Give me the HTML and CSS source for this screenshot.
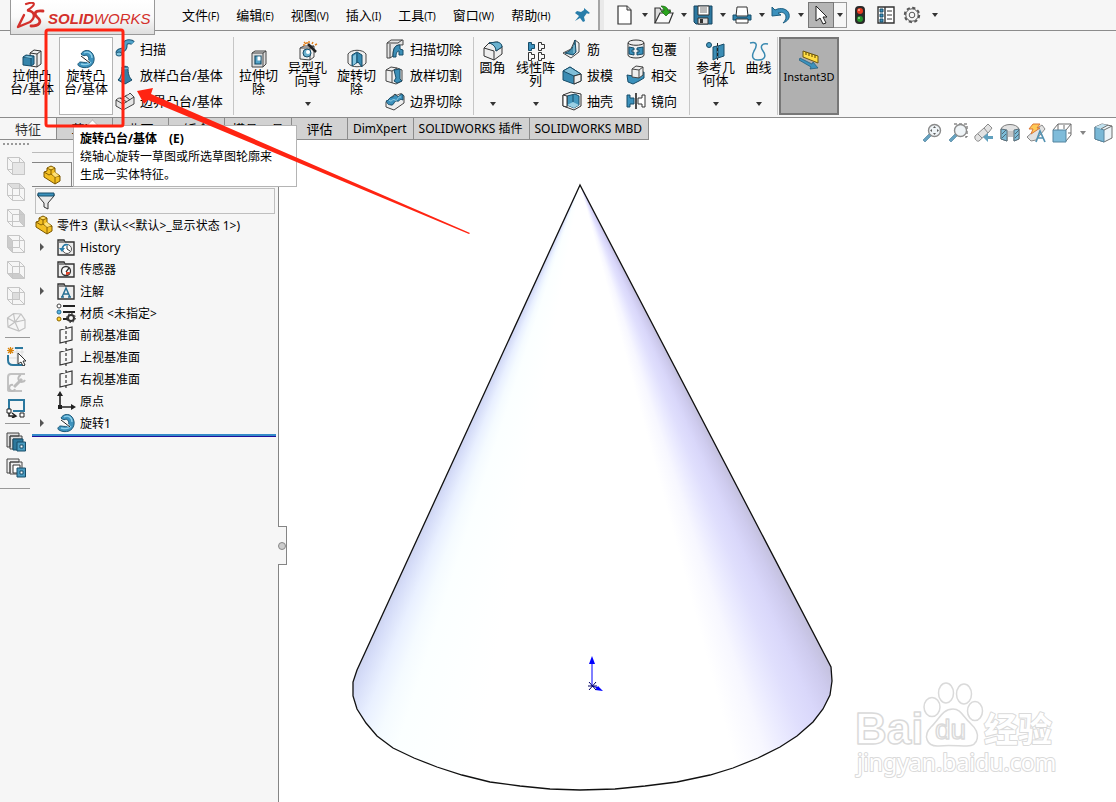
FILE: index.html
```html
<!DOCTYPE html>
<html lang="zh-CN">
<head>
<meta charset="utf-8">
<title>SOLIDWORKS</title>
<link rel="stylesheet" href="styles.css">
</head>
<body>
<svg class="defs" aria-hidden="true">
  <symbol id="revolve" viewBox="0 0 20 20">
    <path d="M5 5C7 1 13 0 16 4c4 5 2 12-3 14-3 1-7 1-10-1-2-1-1-3 1-4 3 0 5 1 7 0 3-2 2-6-1-7-1 1-3 1-5-1z" fill="#3d92bd" stroke="#1d5877"/>
    <path d="M8 4c4-2 8 0 8 5M5 15c4 1 8 1 10-2" fill="none" stroke="#8fd0ea" stroke-width="1.3"/>
    <path d="M5 8l8 5" stroke="#fff" stroke-width="2.400"/><path d="M5 7l9 7" stroke="#222"/>
  </symbol>
  <symbol id="part" viewBox="0 0 20 20">
    <path d="M2 7l3-1V3l4-2 4 2v4l1 1 4 3v5l-5 3L2 12z" fill="#f3bf23" stroke="#7b5700"/>
    <path d="M2 7l5 3 2-1 4 3 5-1M13 12v7M9 5v4M5 3l4 2 4-2" fill="none" stroke="#7b5700" stroke-width=".9"/>
    <path d="M6 3l3-1 3 1-3 1zM10 9l3-2 4 4-4 1z" fill="#ffe17a"/>
  </symbol>
  <symbol id="plane" viewBox="0 0 20 20">
    <path d="M4 5l12-3v13L4 18zM10 1v3M10 6v3M10 11v3M10 16v3" fill="none" stroke="#333" stroke-width="1.2"/>
  </symbol>
  <symbol id="folder" viewBox="0 0 20 20">
    <path d="M2 3h6l1 2h9v13H2z" fill="#eee" stroke="#333" stroke-width="1.4"/><path d="M3 4h5l1 2H3z" fill="#888"/>
  </symbol>
  <symbol id="wire" viewBox="0 0 20 20">
    <path d="M1.500 1.500h12v12h-12zM6.500 6.500h12v12h-12zM1.500 1.500l5 5M13.500 1.500l5 5M1.500 13.500l5 5M13.500 13.500l5 5" fill="none" stroke="#c6c6c6"/>
  </symbol>
  <symbol id="scope" viewBox="0 0 20 20">
    <path d="M1 17l2 2 7-7-2-2z" fill="#4d93b7" stroke="#34708f" stroke-width=".7"/>
    <circle cx="12.500" cy="7.500" r="6" fill="#edf3f6" stroke="#777" stroke-width="1.400"/>
  </symbol>
</svg>

<div class="app">
  <header class="menubar">
    <div class="logo">
      <svg class="logo-mark" viewBox="16 2 32 30" aria-hidden="true">
        <g fill="none" stroke="#d3302b" stroke-linecap="round" stroke-linejoin="round">
          <path d="M26 4C35 1 37 4 28 10" stroke-width="2.200"/>
          <path d="M28 10.500C36 12 35 18 30 22L18 27l6-12" stroke-width="2.400"/>
          <path d="M43 11C34 10 34 14 37 17C43 22 39 26 31 26" stroke-width="2.800"/>
        </g>
      </svg>
      <span class="logo-text"><b>SOLID</b>WORKS</span>
    </div>
    <nav class="menus" aria-label="主菜单">
      <button>文件<small>(F)</small></button>
      <button>编辑<small>(E)</small></button>
      <button>视图<small>(V)</small></button>
      <button>插入<small>(I)</small></button>
      <button>工具<small>(T)</small></button>
      <button>窗口<small>(W)</small></button>
      <button>帮助<small>(H)</small></button>
      <button class="pin" aria-label="固定"><svg viewBox="0 0 20 20"><path d="M11 3l6 5-2 1-1-1-3 4 1 4-2 1-3-4-5 3 4-5-4-3 2-2 4 1 3-2z" fill="#287daa"/></svg></button>
    </nav>
    <div class="quick">
      <button aria-label="新建"><svg viewBox="0 0 20 20"><path d="M3 1h9l4 4v14H3z" fill="#fff" stroke="#333" stroke-width="1.200"/><path d="M12 1v4h4" fill="#ddd" stroke="#333"/></svg></button><button class="drop" aria-label="新建选项"></button>
      <button aria-label="打开"><svg viewBox="0 0 20 20"><path d="M1 18V3h5l1 2h9v3" fill="#ddd" stroke="#333" stroke-width="1.200"/><path d="M1 18L6 8h13l-4 10z" fill="#fafafa" stroke="#333" stroke-width="1.200"/><path d="M7 1c5 0 7 2 7 5h3l-5 5-5-5h3c0-2-1-3-3-5z" fill="#2ba51e" stroke="#176010" stroke-width=".7"/></svg></button><button class="drop" aria-label="打开选项"></button>
      <button aria-label="保存"><svg viewBox="0 0 20 20"><path d="M1 1h18v18H3l-2-2z" fill="#2c78a0" stroke="#174560"/><path d="M5 1h11v9H5z" fill="#fff" stroke="#333"/><path d="M7 3h7M7 5h7M7 7h7" stroke="#777"/><path d="M5 13h10v6H5z" fill="#ddd" stroke="#333"/><path d="M7 14h3v4H7z" fill="#333"/></svg></button><button class="drop" aria-label="保存选项"></button>
      <button aria-label="打印"><svg viewBox="0 0 20 20"><path d="M5 2h10l1 9H4z" fill="#fff" stroke="#333"/><path d="M1 10h3l1 2h10l1-2h3v5H1z" fill="#2f83ad" stroke="#174c68"/><path d="M4 14h12v4H4z" fill="#fff" stroke="#333"/></svg></button><button class="drop" aria-label="打印选项"></button>
      <button aria-label="撤消"><svg viewBox="0 0 20 20"><path d="M1 2v9l9-1-3-2c5-2 8 1 8 4 0 2-1 4-3 6 5-2 7-5 6-9C17 4 10 2 4 5z" fill="#3c91bd" stroke="#1d5e80"/></svg></button><button class="drop" aria-label="撤消选项"></button>
      <button class="select on" aria-label="选择"><svg viewBox="0 0 20 20"><path d="M5 1v15l4-3 3 6 3-1-3-6h4z" fill="#fff" stroke="#222"/></svg></button><button class="drop boxed" aria-label="选择选项"></button>
      <button class="wide" aria-label="重建模型"><svg viewBox="0 0 20 20"><rect x="5" y="1" width="10" height="18" rx="4" fill="#2a2a2a"/><circle cx="10" cy="6" r="3" fill="#e83b22"/><circle cx="10" cy="14" r="3" fill="#26932b"/><circle cx="9" cy="5" r="1" fill="#ffb09c"/><circle cx="9" cy="13" r="1" fill="#9de39b"/></svg></button>
      <button class="wide" aria-label="文件属性"><svg viewBox="0 0 20 20"><path d="M2 2h16v16H2zM9 2v16" fill="#fff" stroke="#333" stroke-width="1.400"/><path d="M4 4h3v3H4zM4 9h3v3H4zM4 14h3v3H4z" fill="#3c91bd" stroke="#174c68"/><path d="M11 6h5M11 10h5M11 14h5" stroke="#333"/></svg></button>
      <button class="wide" aria-label="选项"><svg viewBox="0 0 20 20"><circle cx="10" cy="10" r="7.200" fill="none" stroke="#555" stroke-width="2" stroke-dasharray="3.200 2.450"/><circle cx="10" cy="10" r="6.200" fill="#f6f6f6" stroke="#555"/><circle cx="10" cy="10" r="2.800" fill="none" stroke="#555"/></svg></button><button class="drop" aria-label="更多选项"></button>
    </div>
  </header>

  <section class="ribbon" aria-label="特征工具">
    <div class="group first">
      <button class="tool lg"><svg viewBox="0 0 20 20"><path d="M8 4l4-3 7 1v13l-4 3-6-1z" fill="#eee" stroke="#333"/><path d="M15 5v13M8 4l7 1 4-3" fill="none" stroke="#333"/><path d="M1 8l3-2 8 1v8l-3 2-8-1z" fill="#3584ab" stroke="#174c68"/><path d="M1 8l8 1 3-2M9 9v8" fill="none" stroke="#174c68"/><path d="M2 8l3-1 6 1-2 1z" fill="#88c7e0"/></svg><span>拉伸凸<br>台/基体</span></button>
      <button class="tool lg hover"><svg><use href="#revolve"/></svg><span>旋转凸<br>台/基体</span></button>
      <div class="stack">
        <button class="row"><svg viewBox="0 0 20 20"><path d="M3 14c0-4 8-1 7-8 0-4 6-4 8-2" fill="none" stroke="#1d5877" stroke-width="5"/><path d="M3 14c0-4 8-1 7-8 0-4 6-4 8-2" fill="none" stroke="#4fa3cb" stroke-width="3"/><ellipse cx="4" cy="15" rx="3" ry="2" fill="#82c5df" stroke="#1d5877"/></svg>扫描</button>
        <button class="row"><svg viewBox="0 0 20 20"><path d="M7 2c2-1 4-1 6 0 0 7 1 10 4 13l-7 4-7-4c3-3 4-6 4-13z" fill="#347fa5" stroke="#174c68"/><path d="M7 3c2 1 4 1 6 0M8 5c0 5-1 8-3 10" fill="none" stroke="#8fcde5"/></svg>放样凸台/基体</button>
        <button class="row"><svg viewBox="0 0 20 20"><path d="M1 9c4-4 5 0 8-3s4-1 6-4l4 4v7L8 19l-7-4z" fill="#e5e5e5" stroke="#444"/><path d="M1 9l7 4 11-7M8 13v6M5 7l7 4M10 5l5 4" fill="none" stroke="#444"/></svg>边界凸台/基体</button>
      </div>
    </div>
    <div class="group cuts">
      <button class="tool"><svg viewBox="0 0 20 20"><path d="M3 4l3-2h11v13l-3 3H3z" fill="#ddd" stroke="#444"/><path d="M3 4h11v14M14 4l3-2" fill="none" stroke="#444"/><path d="M6 7h6v8H6z" fill="#56a4c8" stroke="#174c68" stroke-width="1.200"/><path d="M8.500 7.500h3v4h-3z" fill="#fff"/></svg><span>拉伸切<br>除</span></button>
      <button class="tool has-drop"><svg viewBox="0 0 20 20"><path d="M2 7l4-2h10v11l-4 3-10-1z" fill="#eee" stroke="#444"/><path d="M2 7h10v12M12 7l4-2" fill="none" stroke="#444"/><circle cx="9" cy="12" r="4" fill="#69b1cf" stroke="#174c68"/><circle cx="10" cy="11" r="2" fill="#fff"/><path d="M10 3l8 8" stroke="#222" stroke-width="2.500"/><path d="M6 1l2 2M11 0v2M15 1l-1 2M17 4l2-1M5 4h2M8 2h2" stroke="#e17c16" stroke-width="1.400"/></svg><span>异型孔<br>向导</span><i class="caret"></i></button>
      <button class="tool"><svg viewBox="0 0 20 20"><path d="M1 5c3-5 15-5 18 0v9c-3 5-15 5-18 0z" fill="#eee" stroke="#444"/><path d="M5 6l5-3 5 3v12l-4-5-6 4z" fill="#388bb3" stroke="#174c68"/><path d="M10 4v10" stroke="#174c68"/><path d="M6 7l3-2v9l-3 2z" fill="#86c5df"/></svg><span>旋转切<br>除</span></button>
      <div class="stack">
        <button class="row"><svg viewBox="0 0 20 20"><path d="M2 4l4-3h12v5C10 5 8 9 8 17l-3 2H2z" fill="#e5e5e5" stroke="#444"/><path d="M2 4h11l4-3M5 19V5" fill="none" stroke="#444"/><path d="M8 18C8 9 10 6 15 6v4l3 1v5h-4v-4c-2 0-3 2-3 6z" fill="#3d8fb7" stroke="#174c68"/></svg>扫描切除</button>
        <button class="row"><svg viewBox="0 0 20 20"><path d="M1 5l5-3 6 1 5 2v11l-6 3-10-3z" fill="#eee" stroke="#444"/><path d="M1 5l6 1 5-3M7 6v12" fill="none" stroke="#444"/><path d="M9 5l6-1v10l2 2-5 2-3-2 2-3z" fill="#3c8fb7" stroke="#174c68"/></svg>放样切割</button>
        <button class="row"><svg viewBox="0 0 20 20"><path d="M1 11l9-8c3 4 5-4 9 2v7l-10 7-8-3z" fill="#eee" stroke="#444"/><path d="M1 10c3 0 3-4 6-4s3-4 5-1 3-4 6-1v5c-4-2-3 2-6 1s-3 5-6 4-2 1-5-4z" fill="#3c91bd" stroke="#174c68"/><path d="M4 9c3 3 3-2 6 0s2-4 6-3" fill="none" stroke="#9ad2e7"/></svg>边界切除</button>
      </div>
    </div>
    <div class="group mods">
      <button class="tool sm has-drop"><svg viewBox="0 0 20 20"><path d="M1 7l5-5 9-1 4 4v8l-8 6-10-4z" fill="#eee" stroke="#333"/><path d="M1 7l5-5c5 1 7 3 7 8l6-4M1 7l10 3v9" fill="none" stroke="#333"/><path d="M6 2l7-1c4 0 6 2 6 5l-6 4c0-4-3-7-7-8z" fill="#69b1cf" stroke="#174c68"/></svg><span>圆角</span><i class="caret"></i></button>
      <button class="tool has-drop"><svg viewBox="0 0 20 20"><path d="M2.500 11.500h3v2h3v4h-3v2h-3zM12.500 11.500h3v2h3v4h-3v2h-3zM12.500 1.500h3v2h3v4h-3v2h-3z" fill="none" stroke="#333"/><path d="M2.500 1.500h3v2h3v4h-3v2h-3z" fill="#3c91bd" stroke="#174c68"/></svg><span>线性阵<br>列</span><i class="caret"></i></button>
      <div class="stack">
        <button class="row"><svg viewBox="0 0 20 20"><path d="M1 14l8-4 4-9 4 3v9l-8 6z" fill="#eee" stroke="#444"/><path d="M13 1c-1 7-4 11-10 13l8 2 3-3z" fill="#438fae" stroke="#174c68"/><path d="M12 6v8" stroke="#a0d4e7"/></svg>筋</button>
        <button class="row"><svg viewBox="0 0 20 20"><path d="M1 6l7-4 11 7v7l-7 3-11-4z" fill="#398bb3" stroke="#174c68"/><path d="M1 6l11 5 7-2-11-7z" fill="#80bed8" stroke="#174c68"/><path d="M12 11l7-2v7l-7 3z" fill="#eee" stroke="#333"/></svg>拔模</button>
        <button class="row"><svg viewBox="0 0 20 20"><path d="M1 4l8-3 10 2v12l-7 4-11-4z" fill="#f4f4f4" stroke="#333"/><path d="M5 5l8-2 4 2v9l-5 3-7-3z" fill="#4397bd" stroke="#174c68"/><path d="M5 14l6-3 6 3-5 3z" fill="#9bd0e4"/><path d="M11 4v7" stroke="#174c68"/><path d="M1 4l4 1v11l-4-1z" fill="#fff" stroke="#333"/></svg>抽壳</button>
      </div>
      <div class="stack">
        <button class="row"><svg viewBox="0 0 20 20"><path d="M2 4c0-4 16-4 16 0v12c0 4-16 4-16 0z" fill="#eee" stroke="#333"/><path d="M2 4c2 3 14 3 16 0" fill="none" stroke="#333"/><path d="M3 8l5 1v2H6v2h2v3l-5-1zM11 9l6-1v7l-6 1v-3h2v-2h-2z" fill="#3b91bc" stroke="#174c68"/></svg>包覆</button>
        <button class="row"><svg viewBox="0 0 20 20"><path d="M1 10l6 1 5-3 6-1v6l-5 3-6 3-5-2z" fill="#3b91bc" stroke="#174c68"/><path d="M6 4l4-3 7 1v8l-4 3-7-1z" fill="#eee" stroke="#444"/><path d="M6 4l7 1v8M13 5l4-3" fill="none" stroke="#444"/></svg>相交</button>
        <button class="row"><svg viewBox="0 0 20 20"><path d="M10 2v16" stroke="#222" stroke-width="1.600"/><path d="M1 4h3v3h4v6H4v3H1z" fill="#3b91bc" stroke="#174c68"/><path d="M19 4h-3v3h-4v6h4v3h3z" fill="#fff" stroke="#333"/></svg>镜向</button>
      </div>
    </div>
    <div class="group refs">
      <button class="tool has-drop"><svg viewBox="0 0 20 20"><circle cx="3" cy="4" r="2.500" fill="#4299c1" stroke="#174c68"/><path d="M7 6l4-1v12l-4 2zM12 5l6-2v12l-6 2z" fill="#3b8db5" stroke="#174c68"/><path d="M11.500 2v17" stroke="#222" stroke-dasharray="3 2"/></svg><span>参考几<br>何体</span><i class="caret"></i></button>
      <button class="tool sm has-drop"><svg viewBox="0 0 20 20"><path d="M1 2c8-2 7 3 4 8-3 6-1 9 4 9 8 0 8-5 5-9s-2-8 5-7" fill="none" stroke="#3989b0" stroke-width="1.500"/></svg><span>曲线</span><i class="caret"></i></button>
    </div>
    <button class="tool instant" aria-pressed="true"><svg viewBox="0 0 20 20"><path d="M4 1l15 5v7L4 7z" fill="#ffdd45" stroke="#6d5710"/><path d="M7 2v3M10 3v3M13 4v3M16 5v3" stroke="#5b4300"/><path d="M1 8l12 6 1-2 5 6-8 1 1-2L0 10z" fill="#3d92bd" stroke="#1d5877" stroke-width=".7"/></svg><span>Instant3D</span></button>
  </section>

  <div class="tabrow">
    <div class="tabs" role="tablist">
      <button role="tab" aria-selected="true">特征</button>
      <button role="tab">草图</button>
      <button role="tab">曲面</button>
      <button role="tab">钣金</button>
      <button role="tab">模具工具</button>
      <button role="tab">评估</button>
      <button role="tab" class="latin">DimXpert</button>
      <button role="tab" class="latin">SOLIDWORKS 插件</button>
      <button role="tab" class="latin">SOLIDWORKS MBD</button>
    </div>
    <div class="hud">
      <button aria-label="整屏显示全图"><svg viewBox="0 0 20 20"><use href="#scope"/><path d="M12.500 3l-1.500 2h3zM12.500 12l-1.500-2h3zM8 7.500l2-1.500v3zM17 7.500l-2-1.500v3z" fill="#444"/></svg></button>
      <button aria-label="局部放大"><svg viewBox="0 0 20 20"><path d="M6 1h13v13h-4" fill="none" stroke="#333" stroke-dasharray="3 2"/><use href="#scope"/></svg></button>
      <button aria-label="上一视图"><svg viewBox="0 0 20 20"><path d="M1 13l9-8 4-4 4 4-3 4-10 9c-2 1-5-2-4-5z" fill="#ddd" stroke="#777"/><path d="M10 5l4 5M4 11l4 4" stroke="#777"/><path d="M9 14l5-4v3h5v3h-5v3z" fill="#4590b3"/></svg></button>
      <button aria-label="剖面视图"><svg viewBox="0 0 20 20"><path d="M1 6c2-6 16-6 18 0v10l-5 2V9H7v9l-6-2z" fill="#ddd" stroke="#666"/><path d="M7 8h7v6H7z" fill="#bbb"/><path d="M1 6l6 1v11l-6-2zM14 7l5-1v10l-5 2z" fill="#67b2d3" stroke="#3c5664"/><path d="M2 11l4-4M2 15l4-4M15 11l4-4M15 15l4-4" stroke="#2f5162"/></svg></button>
      <button aria-label="动态注解视图"><svg viewBox="0 0 20 20"><path d="M1 14l9-8 6-4 3 4-9 11-5 1z" fill="#ddd" stroke="#777"/><path d="M7 1h7l-3 4h3L5 11l2-5H3z" fill="#ffc13a" stroke="#d75f12"/><path d="M10 19l4-11 5 11M12 15h5" fill="none" stroke="#367fa4" stroke-width="1.700"/></svg></button>
      <button aria-label="视图定向"><svg viewBox="0 0 20 20"><path d="M1 7l5-6h13v11l-5 6" fill="#fff" stroke="#555"/><path d="M14 7l5-6M6 1v6M12 2v4M16 10h3" fill="none" stroke="#555"/><path d="M1 7h13v12H1z" fill="#69b1d4" stroke="#39718f"/></svg></button>
      <button class="drop faded" aria-label="视图选项"></button>
      <button aria-label="显示样式"><svg viewBox="0 0 20 20"><path d="M2 4l7-3 10 2v12l-8 4-9-3z" fill="#e8f3f7" stroke="#555"/><path d="M2 4l9 3v12l-9-3z" fill="#62acd0" stroke="#39718f"/><path d="M2 4l7-3 6 1-7 4z" fill="#b6dced"/><path d="M11 7l8-4M8 6l7-4" stroke="#555"/></svg></button>
    </div>
  </div>

  <main class="workspace">
    <div class="side" role="toolbar" aria-label="视图工具">
      <div class="grip"></div>
      <button aria-label="前视"><svg viewBox="0 0 20 20"><use href="#wire"/><path d="M6.500 6.500h12v12h-12z" fill="#e6e6e6" stroke="#c6c6c6"/></svg></button>
      <button aria-label="后视"><svg viewBox="0 0 20 20"><path d="M2 2h12l4 4H6z" fill="#ddd"/><use href="#wire"/></svg></button>
      <button aria-label="右视"><svg viewBox="0 0 20 20"><path d="M14 2l4 4v12l-4-4z" fill="#ccc"/><use href="#wire"/></svg></button>
      <button aria-label="左视"><svg viewBox="0 0 20 20"><path d="M2 2l4 4v12l-4-4z" fill="#ccc"/><use href="#wire"/></svg></button>
      <button aria-label="上视"><svg viewBox="0 0 20 20"><path d="M2 14h12l4 4H6z" fill="#ccc"/><use href="#wire"/></svg></button>
      <button aria-label="下视"><svg viewBox="0 0 20 20"><path d="M6 6h8v8H6z" fill="#ddd"/><use href="#wire"/></svg></button>
      <button aria-label="等轴测"><svg viewBox="0 0 20 20"><path d="M1.500 6l6-4.500L15 2l4 6v8l-6 3-11-4zM1.500 6L9 10l10-2M9 10l4 9M15 2L9 10l-7 5M7.500 1.500L9 10" fill="none" stroke="#c2c2c2" stroke-width="1.200"/></svg></button>
      <hr>
      <button aria-label="草图"><svg viewBox="0 0 20 20"><path d="M6 2h10v14M2 6h16M2 12h16M11 2v16" fill="none" stroke="#ddd"/><path d="M9 2h8M2 9v5c0 3 2 5 5 5h12" fill="none" stroke="#2b789f" stroke-width="2"/><path d="M4.500 1v7M1 4.500h7M2 2l5 5M7 2L2 7" stroke="#d9830a" stroke-width="1.200"/><path d="M12 7v11l3-2 2 4 2-1-2-4h3z" fill="#fff" stroke="#333"/></svg></button>
      <button aria-label="编辑"><svg viewBox="0 0 20 20"><path d="M19 2H5C3 2 2 3 2 5v13c0 1 1 1 2 1h12" fill="none" stroke="#c2c2c2" stroke-width="2"/><path d="M8 15l8-8" stroke="#bbb" stroke-width="3"/><path d="M9 17a3 3 0 1 1-2-4M15 3a3.500 3.500 0 1 0 4 5" fill="none" stroke="#bbb" stroke-width="2"/></svg></button>
      <button aria-label="移动"><svg viewBox="0 0 20 20"><path d="M3 12V2h15v11H7" fill="none" stroke="#2b789f" stroke-width="2"/><path d="M1 11h4v4H1zM14 15h4v4h-4z" fill="#fff" stroke="#222"/><path d="M3 15v3h6M6 15l4 3-4 2" fill="none" stroke="#222" stroke-width="1.500"/></svg></button>
      <hr>
      <button aria-label="复制实体"><svg viewBox="0 0 20 20"><path d="M1 1h12v3H4v11H1zM4 4h12v3H7v10H4z" fill="#ddd" stroke="#444"/><path d="M7 7h10v11H7z" fill="#2d789c" stroke="#174c68"/><path d="M11 10h8.500v9H11z" fill="#4a9bc0" stroke="#174c68"/><path d="M14 13h3v3h-3z" fill="#fff" stroke="#174c68"/></svg></button>
      <button aria-label="复制面"><svg viewBox="0 0 20 20"><path d="M1 1h12v3H4v11H1zM4 4h12v12H4z" fill="#eee" stroke="#444"/><path d="M7 7h7v8H7z" fill="#fff" stroke="#333"/><path d="M11 10h8.500v9H11z" fill="#4a9bc0" stroke="#174c68"/><path d="M14 13h3v3h-3z" fill="#fff" stroke="#174c68"/></svg></button>
      <hr class="full">
    </div>
    <aside class="panel">
      <div class="panel-tabs"><button aria-label="特征管理器"><svg><use href="#part"/></svg></button></div>
      <label class="filter"><svg viewBox="0 0 20 20"><path d="M2 3h16v2l-6 7v6l-4-2v-4L2 5z" fill="#e8e8e8" stroke="#333"/><path d="M2 2h16v3H2z" fill="#3b91bc" stroke="#174c68"/></svg><input type="text" aria-label="过滤"></label>
      <ul class="tree">
        <li class="root"><svg><use href="#part"/></svg><span>零件3&nbsp; (默认&lt;&lt;默认&gt;_显示状态 1&gt;)</span></li>
        <li class="open"><svg viewBox="0 0 20 20"><use href="#folder"/><circle cx="11" cy="12" r="4.500" fill="#fff" stroke="#555"/><path d="M11 9v3l3 2" fill="none" stroke="#333"/><path d="M3 11h6l-3 4z" fill="#287daa"/><path d="M6 12c1-4 3-5 6-4" fill="none" stroke="#287daa" stroke-width="1.600"/></svg><span>History</span></li>
        <li><svg viewBox="0 0 20 20"><use href="#folder"/><circle cx="10" cy="12" r="4.500" fill="#fff" stroke="#333" stroke-width="1.300"/><path d="M10 13l3-4" stroke="#333" stroke-width="1.300"/><path d="M10 13l4 0c0 2-2 3-4 3z" fill="#e0442a"/></svg><span>传感器</span></li>
        <li class="open"><svg viewBox="0 0 20 20"><use href="#folder"/><path d="M6 16l4-9 4 9M7 13h6M5 16h3M12 16h3" fill="none" stroke="#276f93" stroke-width="1.500"/></svg><span>注解</span></li>
        <li><svg viewBox="0 0 20 20"><path d="M7 3h12M7 9h12M7 16h5" stroke="#222" stroke-width="2"/><circle cx="3" cy="3" r="2" fill="#fff" stroke="#444"/><circle cx="3" cy="9" r="2" fill="#58b3e0" stroke="#276f93"/><circle cx="3" cy="16" r="2" fill="#ffd12e" stroke="#8a6400"/><circle cx="15" cy="15" r="3" fill="none" stroke="#333" stroke-width="2"/><circle cx="15" cy="15" r="4.500" fill="none" stroke="#333" stroke-dasharray="1.500 2"/></svg><span>材质 &lt;未指定&gt;</span></li>
        <li><svg><use href="#plane"/></svg><span>前视基准面</span></li>
        <li><svg><use href="#plane"/></svg><span>上视基准面</span></li>
        <li><svg><use href="#plane"/></svg><span>右视基准面</span></li>
        <li><svg viewBox="0 0 20 20"><path d="M4 3v13h13" fill="none" stroke="#222" stroke-width="1.600"/><path d="M4 0l-3 5h6zM20 16l-5-3v6zM2 14h4v4H2z" fill="#222"/></svg><span>原点</span></li>
        <li class="open"><svg><use href="#revolve"/></svg><span>旋转1</span></li>
      </ul>
      <div class="rollback"></div>
      <button class="splitter" aria-label="折叠面板"></button>
    </aside>
    <div class="viewport">
      <svg viewBox="279 140 837 662" role="img" aria-label="圆锥">
        <defs><clipPath id="cone"><path id="cone-outline" d="M580 185L357 670 353 682V696L357 709 366 723 377 736 393 748 414 758 437 767 462 775 490 782 520 786 550 789 580 790 615 789 645 786 677 782 710 775 733 768 758 758 780 747 797 736 813 722 823 709 830 695 832 681 831 667z"/></clipPath></defs>
        <g clip-path="url(#cone)"><foreignObject x="353" y="185" width="480" height="606"><div class="cone-shade"></div></foreignObject></g>
        <use href="#cone-outline" fill="none" stroke="#111" stroke-width="1.300"/>
        <g stroke="#00f" fill="#00f"><path d="M592 686v-24M592 686l6 2"/><path d="M592 656l-3 8h6zM603 691l-8-1 3-4z" stroke="none"/><path d="M588 686h9M589 682l7 8M596 682l-7 8" stroke="#006"/></g>
        <g class="mark">
          <text x="855" y="744" class="mark-latin">Bai</text>
          <ellipse cx="932" cy="707" rx="8" ry="9.500"/><ellipse cx="946" cy="693" rx="7.500" ry="10"/><ellipse cx="964" cy="694" rx="7.500" ry="10"/><ellipse cx="975" cy="711" rx="7.500" ry="9.500"/>
          <path d="M953 709c8 0 10 8 18 15 10 9 8 22-4 22-8 0-20-1-28 0-13 1-16-11-8-19 8-7 11-18 22-18z"/>
          <text x="935" y="739" class="mark-du">du</text>
          <text x="984" y="742" class="mark-cjk">经验</text>
          <text x="857" y="771" class="mark-url">jingyan.baidu.com</text>
        </g>
      </svg>
    </div>
  </main>

  <div class="tooltip" role="tooltip">
    <strong>旋转凸台/基体<span>(E)</span></strong>
    <p>绕轴心旋转一草图或所选草图轮廓来<br>生成一实体特征。</p>
  </div>
  <svg class="callout" viewBox="0 0 480 240" aria-hidden="true">
    <rect x="46" y="30" width="77" height="96" rx="2" fill="none" stroke="#ff2412" stroke-width="3"/>
    <path d="M137 91l16-3-2 6 319 139-1 1-321-134-4 4z" fill="#ff2412"/>
  </svg>
</div>
</body>
</html>
```

FILE: styles.css
```css
* { box-sizing: border-box; }
body {
  margin: 0;
  background: #fff;
  color: #000;
  font: 12px/18px "Noto Sans", "Noto Sans CJK SC", sans-serif;
}
button {
  margin: 0;
  padding: 0;
  border: 0;
  background: none;
  color: inherit;
  font: inherit;
  white-space: nowrap;
}
button svg, .tree svg, .filter svg { display: block; flex: none; width: 20px; height: 20px; }
.defs { display: none; }

.app {
  position: relative;
  display: flex;
  flex-direction: column;
  height: 100vh;
  overflow: hidden;
}

/* Menu bar */
.menubar {
  display: flex;
  flex: none;
  height: 31px;
  border-bottom: 1px solid #8c8c8c;
  background: #f6f6f6;
}
.logo {
  position: absolute;
  top: 0;
  left: 10px;
  z-index: 1;
  display: flex;
  align-items: center;
  width: 145px;
  height: 35px;
  padding-left: 5px;
  border: 1px solid #999;
  border-top: 0;
  background: linear-gradient(#fff, #fafafa 50%, #dedede);
}
.logo-mark { flex: none; width: 32px; height: 30px; }
.logo-text { padding-top: 4px; color: #d3302b; font: italic 15px/20px "Liberation Sans", sans-serif; }
.menus {
  display: flex;
  flex: none;
  gap: 17px;
  width: 600px;
  padding-left: 182px;
  border-right: 2px solid #a5a5a5;
  font-size: 13px;
}
.menus small { font-size: 10px; }
.menus .pin { margin-left: 5px; }
.quick { display: flex; align-items: center; padding-left: 15px; box-shadow: inset 4px 0 0 #e9e9e9; }
.quick .select { width: 26px; height: 26px; margin-left: -2px; padding-left: 2px; border: 1px solid #777; background: #b5b5b5; }
.quick .wide { width: 26px; padding-left: 3px; }
.drop { display: flex; align-items: center; justify-content: center; width: 19px; height: 26px; }
.drop::before, .caret {
  width: 0;
  height: 0;
  border: 3px solid transparent;
  border-top: 4px solid #333;
  border-bottom: 0;
  content: "";
}
.drop.boxed { width: 13px; border: 1px solid #999; border-left: 0; }
.drop.faded { width: 15px; height: 20px; opacity: .6; }

/* Ribbon */
.ribbon {
  display: flex;
  flex: none;
  height: 87px;
  padding: 6px 0 2px;
  border-bottom: 1px solid #8c8c8c;
  background: #f6f6f6;
  font-size: 13px;
  line-height: 13px;
}
.group { display: flex; flex: none; border-right: 1px solid #c6c6c6; }
.group.first { width: 234px; padding-left: 5px; }
.group.cuts { width: 240px; }
.group.mods { width: 216px; }
.group.refs { width: 88px; padding-left: 1px; }
.tool {
  display: flex;
  flex: none;
  flex-direction: column;
  align-items: center;
  width: 49px;
  padding-top: 11px;
  border: 1px solid transparent;
}
.tool.lg { width: 54px; }
.tool.sm { width: 37px; }
.tool.has-drop { padding: 3px 0 8px; }
.tool .caret { margin-top: auto; }
.tool.hover { border-color: #b4b4b4; background: #fff; }
.tool.instant { width: 60px; margin-left: 1px; border: 2px solid #777; background: #b0b0b0; font-size: 11px; }
.stack { display: flex; flex-direction: column; padding-left: 2px; }
.cuts .stack { padding-left: 4px; }
.stack + .stack { padding-left: 13px; }
.row { display: flex; align-items: center; gap: 5px; height: 26px; padding-bottom: 2px; }

/* Tab row */
.tabrow { display: flex; flex: none; justify-content: space-between; height: 22px; }
.tabs { display: flex; flex: none; border-right: 1px solid #8c8c8c; border-bottom: 1px solid #8c8c8c; }
.tabs button {
  min-width: 56px;
  padding: 0 7px;
  border-left: 1px solid #8c8c8c;
  background: #d2d2d2;
  font-size: 13px;
}
.tabs .latin { padding: 0 6px 0 5px; font-size: 12px; }
.tabs button[aria-selected] { border-left: 0; background: #f6f6f6; color: #333; }
.hud { display: flex; gap: 6px; height: 20px; margin: 5px 3px 0 0; }
.hud .drop { margin: 0 -3px; }
.hud svg { opacity: .85; }

/* Feature tree */
.workspace { display: flex; flex: 1; min-height: 0; }
.side { display: flex; flex: none; flex-direction: column; width: 32px; background: #f6f6f6; }
.side button { display: flex; flex: none; align-items: center; height: 26px; padding-left: 6px; }
.side hr { width: 25px; margin: 2px 0 5px 5px; border: 0; border-top: 1px solid #999; }
.side hr.full { width: 30px; margin: 7px 0 0; }
.grip { flex: none; width: 27px; height: 2px; margin: 3px 0 8px 3px; background: repeating-linear-gradient(90deg, #999 0 2px, transparent 2px 4px); }
.panel {
  position: relative;
  flex: none;
  width: 247px;
  padding-top: 12px;
  border-right: 1px solid #858585;
  background: #f6f6f6;
}
.panel-tabs { padding-top: 9px; border-top: 1px solid #bbb; border-bottom: 1px solid #858585; }
.panel-tabs button { display: flex; align-items: center; justify-content: center; width: 40px; height: 24px; border-top: 1px solid #858585; border-right: 1px solid #858585; }
.filter {
  display: flex;
  align-items: center;
  height: 26px;
  margin: 1px 3px 0;
  border: 1px solid #bfbfbf;
}
.filter input { flex: 1; min-width: 0; border: 0; background: none; font: inherit; }
.tree { margin: 0; padding: 0; list-style: none; }
.tree li { display: flex; align-items: center; gap: 4px; height: 22px; padding-left: 24px; white-space: nowrap; }
.tree span { padding-top: 2px; }
.tree .root { gap: 3px; padding-left: 2px; }
.tree .open { position: relative; }
.tree .open::before {
  position: absolute;
  left: 8px;
  border: 4px solid transparent;
  border-right: 0;
  border-left-color: #555;
  content: "";
}
.rollback { height: 3px; margin-right: 2px; border-bottom: 1px solid #20109a; background: #348bc9; }
.splitter {
  position: absolute;
  top: 386px;
  right: -9px;
  width: 9px;
  height: 39px;
  border: 1px solid #858585;
  border-left: 0;
  background: #f6f6f6;
}
.splitter::before { display: block; width: 6px; height: 6px; border: 1px solid #888; border-radius: 50%; background: #ccc; content: ""; }

/* Graphics area */
.viewport { flex: 1; min-width: 0; }
.viewport > svg { display: block; width: 100%; height: 100%; }
.cone-shade {
  height: 100%;
  background: conic-gradient(at 227px 0,
    #c0bdd8 152deg, #cecbee 154deg, #d9d7fa 156deg, #e0dffd 158deg, #ebebff 160deg,
    #f7f7ff 162deg, #fff 165deg, #fff 190deg, #fbffff 198deg,
    #f5fbff 200deg, #e9f0ff 202deg, #d5dcf8 204deg, #cbd1ec 205deg);
}
.mark { fill: #fff; stroke: #dadada; stroke-width: 1.5px; stroke-linejoin: round; }
.mark-latin { font: bold 44px "Liberation Sans", sans-serif; }
.mark-du { font: 28px "Liberation Sans", sans-serif; }
.mark-cjk { font: bold 34px "Noto Sans CJK SC", sans-serif; stroke-width: 2px; paint-order: stroke; }
.mark-url { font: 23px "Noto Sans", sans-serif; stroke-width: 2px; paint-order: stroke; }

/* Overlays */
.tooltip {
  position: absolute;
  top: 125px;
  left: 73px;
  width: 224px;
  padding: 4px 6px 2px;
  border: 1px solid #b4b4b4;
  background: #fff;
}
.tooltip::before {
  position: absolute;
  top: -5px;
  left: 14px;
  width: 8px;
  height: 8px;
  border: 1px solid #b4b4b4;
  border-right: 0;
  border-bottom: 0;
  background: #fff;
  transform: rotate(45deg);
  content: "";
}
.tooltip strong { display: block; }
.tooltip span { margin-left: 12px; }
.tooltip p { margin: 0; }
.callout { position: absolute; top: 0; left: 0; z-index: 2; width: 480px; height: 240px; pointer-events: none; }
```
